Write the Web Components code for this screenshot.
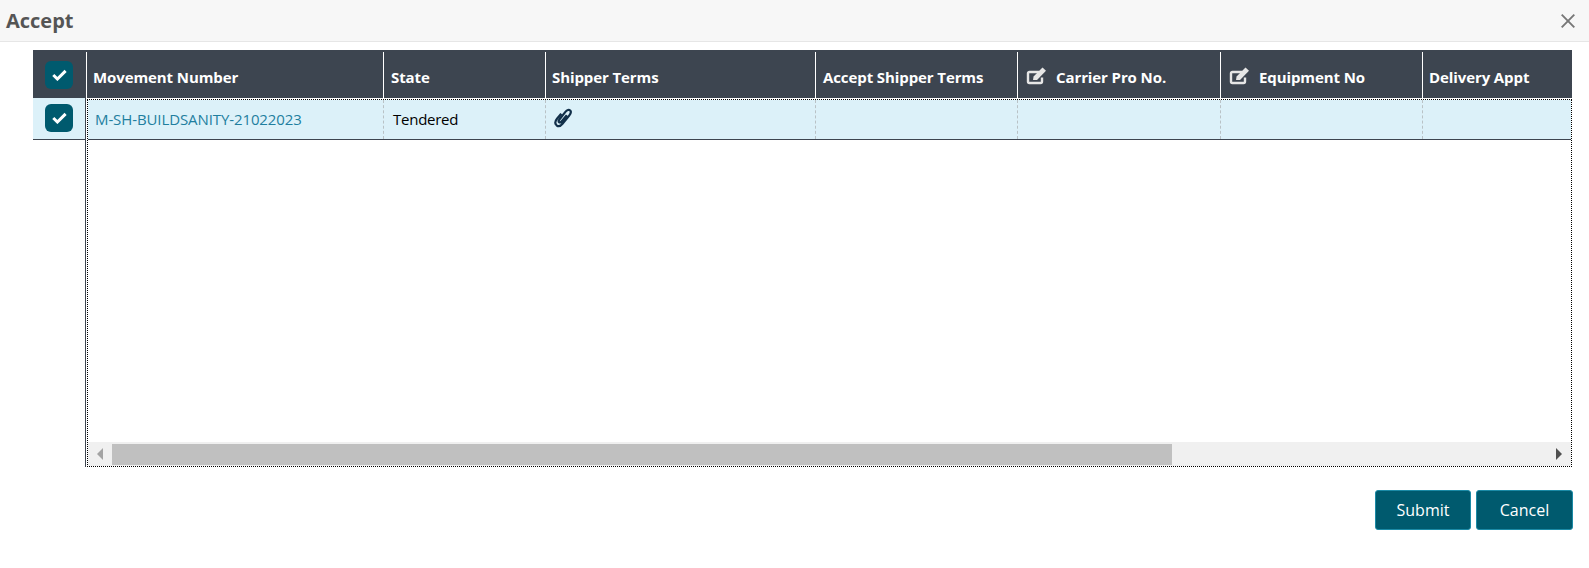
<!doctype html>
<html>
<head>
<meta charset="utf-8">
<title>Accept</title>
<style>
  html, body { margin: 0; background: #fff; }
  body { font-family: 'Open Sans', 'Liberation Sans', sans-serif; }
</style>
</head>
<body>
<accept-dialog>
  <dialog-title slot="title">Accept</dialog-title>
  <grid-rail slot="rail"></grid-rail>
  <grid-pane slot="pane">
    <grid-head slot="head">
      <head-cell>Movement Number</head-cell>
      <head-cell inset>State</head-cell>
      <head-cell>Shipper Terms</head-cell>
      <head-cell inset>Accept Shipper Terms</head-cell>
      <head-cell editable>Carrier Pro No.</head-cell>
      <head-cell editable>Equipment No</head-cell>
      <head-cell>Delivery Appt</head-cell>
    </grid-head>
    <grid-row slot="rows">
      <row-cell link first>M-SH-BUILDSANITY-21022023</row-cell>
      <row-cell tight>Tendered</row-cell>
      <row-cell><clip-icon></clip-icon></row-cell>
      <row-cell></row-cell>
      <row-cell></row-cell>
      <row-cell></row-cell>
      <row-cell></row-cell>
    </grid-row>
    <h-scrollbar slot="scroll"></h-scrollbar>
  </grid-pane>
  <action-button slot="actions">Submit</action-button>
  <action-button slot="actions" wide>Cancel</action-button>
</accept-dialog>

<script>
const CHECK = `<svg width="15" height="12" viewBox="0 0 15 12"><path d="M1.300 6 5.400 10 13.600 1.900" fill="none" stroke="#fff" stroke-width="3"/></svg>`

class AcceptDialog extends HTMLElement {
  constructor() {
    super()
    this.attachShadow({ mode: 'open' }).innerHTML = `
      <style>
        :host { display: block; width: 1589px; height: 568px; overflow: hidden; }
        .content { display: flex; padding: 8px 0 0 33px; }
        .actions { display: flex; justify-content: flex-end; gap: 5px; padding: 23px 16px 0 0; }
      </style>
      <slot name="title"></slot>
      <div class="content">
        <slot name="rail"></slot>
        <slot name="pane"></slot>
      </div>
      <div class="actions"><slot name="actions"></slot></div>`
  }
}

class DialogTitle extends HTMLElement {
  constructor() {
    super()
    this.attachShadow({ mode: 'open' }).innerHTML = `
      <style>
        :host {
          display: flex;
          align-items: center;
          justify-content: space-between;
          box-sizing: border-box;
          height: 42px;
          padding: 0 14px 0 6px;
          background: #f7f7f7;
          border-bottom: 1px solid #e6e6e6;
          color: #555;
          font: 700 20px 'Open Sans', sans-serif;
        }
        svg { display: block; margin-top: 1px; }
      </style>
      <slot></slot>
      <svg width="14" height="14" viewBox="0 0 14 14"><path d="M.7.7l12.6 12.6M13.3.7.7 13.3" stroke="#777" stroke-width="1.900" fill="none"/></svg>`
  }
}

class CheckBox extends HTMLElement {
  constructor() {
    super()
    this.attachShadow({ mode: 'open' }).innerHTML = `
      <style>
        :host {
          display: flex;
          align-items: center;
          justify-content: center;
          width: 28px;
          height: 28px;
          border-radius: 6px;
          background: #005a6e;
        }
        svg { display: block; }
      </style>
      ${CHECK}`
  }
}

class GridRail extends HTMLElement {
  constructor() {
    super()
    this.attachShadow({ mode: 'open' }).innerHTML = `
      <style>
        :host { display: block; width: 52px; flex: none; }
        .top, .row { display: flex; justify-content: center; box-sizing: border-box; }
        .top { height: 48px; padding-top: 11px; background: #3d4550; }
        .row { height: 42px; padding-top: 6px; background: #dcf1f9; border-bottom: 1px solid #3d4550; }
      </style>
      <div class="top"><check-box></check-box></div>
      <div class="row"><check-box></check-box></div>`
  }
}

class GridPane extends HTMLElement {
  constructor() {
    super()
    this.attachShadow({ mode: 'open' }).innerHTML = `
      <style>
        :host { display: block; width: 1487px; flex: none; }
        .body {
          box-sizing: border-box;
          height: 369px;
          border-left: 1px solid #3d4550;
          padding: 1px 0 0 1px;
        }
        .frame {
          box-sizing: border-box;
          height: 100%;
          display: flex;
          flex-direction: column;
          border: 1px dotted #000;
        }
        .rows { flex: 1; }
      </style>
      <slot name="head"></slot>
      <div class="body">
        <div class="frame">
          <div class="rows"><slot name="rows"></slot></div>
          <slot name="scroll"></slot>
        </div>
      </div>`
  }
}

class GridHead extends HTMLElement {
  constructor() {
    super()
    this.attachShadow({ mode: 'open' }).innerHTML = `
      <style>
        :host {
          display: grid;
          grid-template-columns: 297px 162px 270px 202px 203px 202px 150px;
          box-sizing: border-box;
          height: 48px;
          padding: 2px 0 0 1px;
          background: #3d4550;
        }
      </style>
      <slot></slot>`
  }
}

class HeadCell extends HTMLElement {
  constructor() {
    super()
    const icon = this.hasAttribute('editable')
      ? `<svg width="21" height="19" viewBox="0 0 21 19"><path d="M13.500 6H3.400A1.400 1.400 0 0 0 2 7.400v8.200A1.400 1.400 0 0 0 3.400 17h11.200a1.400 1.400 0 0 0 1.400-1.400V11.500" fill="none" stroke="#e6e6e6" stroke-width="2.400"/><path d="M7 14 7.600 10.400 16.500 1.500 20 4.800 11 14z" fill="#e6e6e6"/></svg>`
      : ''
    this.attachShadow({ mode: 'open' }).innerHTML = `
      <style>
        :host {
          display: flex;
          align-items: center;
          gap: 9px;
          box-sizing: border-box;
          padding: 4px 0 0 6px;
          border-left: 1px solid #fff;
          color: #fff;
          font: 700 15px 'Open Sans', sans-serif;
          letter-spacing: -.1px;
          white-space: nowrap;
        }
        :host([inset]) { padding-left: 7px; }
        :host([editable]) { padding-left: 8px; }
        svg { display: block; flex: none; margin-top: -3px; }
      </style>
      ${icon}<slot></slot>`
  }
}

class GridRow extends HTMLElement {
  constructor() {
    super()
    this.attachShadow({ mode: 'open' }).innerHTML = `
      <style>
        :host {
          display: grid;
          grid-template-columns: 295px 162px 270px 202px 203px 202px 1fr;
          box-sizing: border-box;
          height: 40px;
          background: #dcf1f9;
          border-bottom: 1px solid #3d4550;
        }
      </style>
      <slot></slot>`
  }
}

class RowCell extends HTMLElement {
  constructor() {
    super()
    this.attachShadow({ mode: 'open' }).innerHTML = `
      <style>
        :host {
          display: flex;
          align-items: center;
          box-sizing: border-box;
          padding: 0 0 2px 8px;
          border-left: 1px dashed #b9c2c6;
          color: #000;
          font: 400 15px 'Open Sans', sans-serif;
          white-space: nowrap;
        }
        :host([first]) { border-left: 0; padding-left: 7px; }
        :host([link]) { color: #1f7f9f; letter-spacing: -.1px; }
        :host([tight]) { letter-spacing: -.25px; padding-left: 9px; }
      </style>
      <slot></slot>`
  }
}

class ClipIcon extends HTMLElement {
  constructor() {
    super()
    this.attachShadow({ mode: 'open' }).innerHTML = `
      <style>
        :host { display: block; width: 19px; height: 20px; margin-top: -1px; }
        svg { display: block; }
      </style>
      <svg width="19" height="20" viewBox="0 0 19 20">
        <path d="M7.200 5.600 3 10.800C1 13.300.9 15.800 2.600 17.300c1.700 1.400 4 .8 5.900-1.500l6.700-8.200c1.700-2.100 2.200-3.900 1-5.100-1.300-1.200-3.100-.6-4.800 1.400L5.600 11.300C4.600 12.500 4.400 13.600 5.100 14.200c.7.600 1.700.2 2.700-1l5-6.100" fill="none" stroke="#12304a" stroke-width="2.200"/>
      </svg>`
  }
}

class HScrollbar extends HTMLElement {
  constructor() {
    super()
    this.attachShadow({ mode: 'open' }).innerHTML = `
      <style>
        :host {
          display: flex;
          align-items: center;
          box-sizing: border-box;
          height: 24px;
          background: #f0f0f0;
        }
        .btn { flex: none; display: flex; align-items: center; justify-content: center; width: 24px; height: 100%; }
        .thumb { flex: none; align-self: flex-start; width: 1060px; height: 21px; margin-top: 2px; background: #c0c0c0; }
        .spacer { flex: 1; }
        svg { display: block; }
      </style>
      <div class="btn"><svg width="6" height="12" viewBox="0 0 6 12"><path d="M6 0v12L0 6z" fill="#a3a3a3"/></svg></div>
      <div class="thumb"></div>
      <div class="spacer"></div>
      <div class="btn"><svg width="6" height="12" viewBox="0 0 6 12"><path d="M0 0v12l6-6z" fill="#505050"/></svg></div>`
  }
}

class ActionButton extends HTMLElement {
  constructor() {
    super()
    this.attachShadow({ mode: 'open' }).innerHTML = `
      <style>
        :host {
          display: flex;
          align-items: center;
          justify-content: center;
          box-sizing: border-box;
          width: 96px;
          height: 40px;
          border: 1px solid #1b8aa6;
          border-radius: 3px;
          background: #005a6e;
          color: #fff;
          font: 400 16px 'Open Sans', sans-serif;
        }
        :host([wide]) { width: 97px; }
      </style>
      <slot></slot>`
  }
}

customElements.define('check-box', CheckBox)
customElements.define('clip-icon', ClipIcon)
customElements.define('dialog-title', DialogTitle)
customElements.define('grid-rail', GridRail)
customElements.define('head-cell', HeadCell)
customElements.define('grid-head', GridHead)
customElements.define('row-cell', RowCell)
customElements.define('grid-row', GridRow)
customElements.define('h-scrollbar', HScrollbar)
customElements.define('grid-pane', GridPane)
customElements.define('action-button', ActionButton)
customElements.define('accept-dialog', AcceptDialog)
</script>
</body>
</html>
